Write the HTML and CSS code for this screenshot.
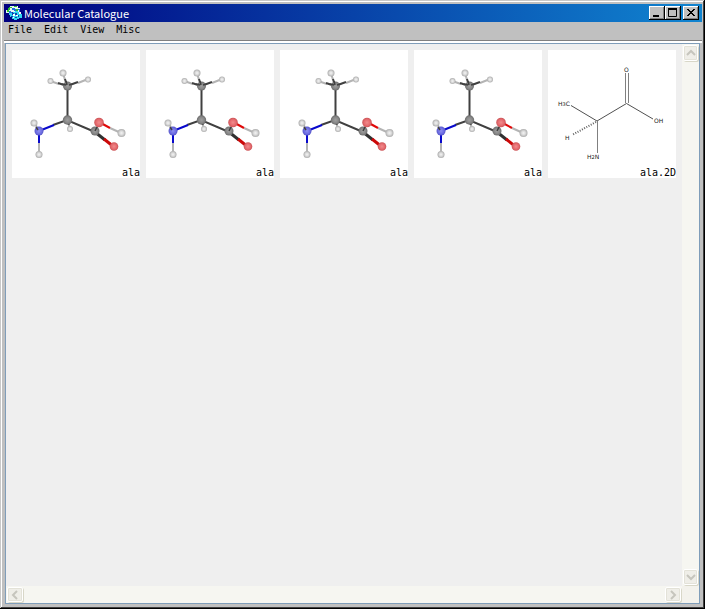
FILE: index.html
```html
<!DOCTYPE html>
<html lang="en">
<head>
<meta charset="utf-8">
<title>Molecular Catalogue</title>
<link rel="stylesheet" href="styles.css">
</head>
<body>
<svg class="defs" aria-hidden="true">
  <defs>
    <radialGradient id="carbon"><stop offset="0" stop-color="#a0a0a0"/><stop offset=".6" stop-color="#898989"/><stop offset="1" stop-color="#6c6c6c"/></radialGradient>
    <radialGradient id="hydrogen"><stop offset="0" stop-color="#f4f4f4"/><stop offset=".5" stop-color="#dadada"/><stop offset="1" stop-color="#acacac"/></radialGradient>
    <radialGradient id="oxygen"><stop offset="0" stop-color="#f08c8c"/><stop offset=".6" stop-color="#e66c70"/><stop offset="1" stop-color="#cc5558"/></radialGradient>
    <radialGradient id="nitrogen"><stop offset="0" stop-color="#9090f0"/><stop offset=".6" stop-color="#7070e4"/><stop offset="1" stop-color="#5858c8"/></radialGradient>
    <symbol id="alanine" viewBox="0 0 128 128">
      <g fill="none" stroke-width="2">
        <path stroke="#b4b4b4" d="M51 23l2 7M38 31l9 3M76 29l-10 4M27 104V93M58 79l-1-4M98 78l11 5M22 73l3 4"/>
        <path stroke="#404040" d="M53 29l2 7M46 33l9 3M55 36l11-4M55.500 36v34M41 75L55 70l28 12M55 70l2 5M83 82l2-5"/>
        <path stroke="#0808cc" d="M27 81l15-6M27 81v12"/>
        <path stroke="#e00808" d="M87 72l11 6"/>
        <path stroke="#303030" stroke-width="3" d="M83 82l10 8"/>
        <path stroke="#cc0808" stroke-width="3" d="M92 89l10 8"/>
      </g>
      <g fill="url(#hydrogen)">
        <circle cx="51" cy="23" r="3.500"/><circle cx="38.500" cy="31" r="3"/><circle cx="76" cy="29.500" r="3"/>
        <circle cx="22" cy="73" r="3.500"/><circle cx="27" cy="104.500" r="3.500"/><circle cx="58" cy="79" r="3"/><circle cx="109.500" cy="83" r="4"/>
      </g>
      <g fill="url(#carbon)"><circle cx="55.500" cy="36" r="4.500"/><circle cx="55.500" cy="70" r="4.700"/><circle cx="83" cy="81" r="4.500"/></g>
      <g fill="url(#oxygen)"><circle cx="87" cy="72.500" r="4.800"/><circle cx="102" cy="96.500" r="4.300"/></g>
      <circle cx="27" cy="81" r="4.500" fill="url(#nitrogen)"/>
      <path stroke="#404040" stroke-width="1.500" d="M24 77l2 3M83 81l2-4M54 31l1 4M50 34l4 1M57 35l4-1"/>
    </symbol>
  </defs>
</svg>
<div class="window">
  <header class="titlebar">
    <svg class="logo" viewBox="0 0 16 16" shape-rendering="crispEdges" aria-hidden="true">
      <path fill="#e4f8f4" d="M4 1h8v2h2v4H9v2H4V8H0V5h2V3h2z"/>
      <path fill="#30c030" d="M3 2h3v1H4v2H2V3h1zM8 1h3v1H8zM1 5h2v2H1zM10 4h2v2h-2z"/>
      <path fill="#2070e0" d="M6 3h3v1h1v2H8V5H6zM12 4h2v3h-1V5h-1zM3 6h2v1h1v2H3z"/>
      <path fill="#30d8f0" d="M9 6h3v1h3v2h1v4h-3v1h-2v1H8v-1H6v-2H4v-2H3V8h3V7h3z"/>
      <path fill="#1040b0" d="M6 7h1v1h1v2H6zM9 8h2v2H9zM5 11h2v1H5zM9 12h2v1H9zM12 10h1v2h-1z"/>
      <path fill="#fff" d="M7 9h2v2H7zM13 7h2v2h-2zM7 12h1v1H7zM10 10h2v1h-2z"/>
    </svg>
    <h1 class="title">Molecular Catalogue</h1>
    <div class="controls">
      <button class="control" aria-label="Minimize"><svg viewBox="0 0 12 10"><path d="M2 8h6" stroke="#000" stroke-width="2"/></svg></button>
      <button class="control" aria-label="Maximize"><svg viewBox="0 0 12 10"><path d="M1.500 0v8.500h8V0" fill="none" stroke="#000"/><path d="M1 1h9" stroke="#000" stroke-width="2"/></svg></button>
      <button class="control control-close" aria-label="Close"><svg viewBox="0 0 12 10" shape-rendering="crispEdges"><path d="M2 1h2v1h1v1h2V2h1V1h2v1H9v1H8v1H7v1h1v1h1v1h1v1H8V7H7V6H5v1H4v1H2V7h1V6h1V5h1V4H4V3H3V2H2z"/></svg></button>
    </div>
  </header>
  <nav class="menubar">
    <button class="menu">File</button><button class="menu">Edit</button><button class="menu">View</button><button class="menu">Misc</button>
  </nav>
  <div class="pane">
    <main class="catalogue">
      <figure class="card"><svg class="drawing"><use href="#alanine"/></svg><figcaption class="name">ala</figcaption></figure>
      <figure class="card"><svg class="drawing"><use href="#alanine"/></svg><figcaption class="name">ala</figcaption></figure>
      <figure class="card"><svg class="drawing"><use href="#alanine"/></svg><figcaption class="name">ala</figcaption></figure>
      <figure class="card"><svg class="drawing"><use href="#alanine"/></svg><figcaption class="name">ala</figcaption></figure>
      <figure class="card">
        <svg class="drawing" viewBox="0 0 128 128">
          <g fill="none" stroke="#505050">
            <path d="M23 55.500L49 71L78.500 53.500L105 69"/>
            <path stroke="#808080" d="M77.500 53V23M80.500 53V23M49.500 71v32"/>
            <path stroke="#606060" stroke-width="2" stroke-dasharray="1 1.500" d="M48 72L24 85"/>
          </g>
          <g class="atoms"><text x="10" y="56">H<tspan class="sub">3</tspan>C</text><text x="76" y="22">O</text><text x="106" y="73">OH</text><text x="17" y="90">H</text><text x="39" y="109">H<tspan class="sub">2</tspan>N</text></g>
        </svg>
        <figcaption class="name">ala.2D</figcaption>
      </figure>
    </main>
    <div class="scroll scroll-y">
      <button class="arrow" aria-label="Scroll up"><svg viewBox="0 0 12 12"><path d="M2 8l4-4l4 4"/></svg></button>
      <button class="arrow" aria-label="Scroll down"><svg viewBox="0 0 12 12"><path d="M2 4l4 4l4-4"/></svg></button>
    </div>
    <div class="scroll scroll-x">
      <button class="arrow" aria-label="Scroll left"><svg viewBox="0 0 12 12"><path d="M8 2L4 6l4 4"/></svg></button>
      <button class="arrow" aria-label="Scroll right"><svg viewBox="0 0 12 12"><path d="M4 2l4 4l-4 4"/></svg></button>
    </div>
    <div class="corner"></div>
  </div>
</div>
</body>
</html>
```
FILE: styles.css
```css
* { box-sizing: border-box; }
body { margin: 0; background: #c0c0c0; }
.defs { position: absolute; width: 0; height: 0; }
.window {
  display: flex;
  flex-direction: column;
  min-height: 100vh;
  padding: 4px 3px 3px 4px;
  background: #c0c0c0;
  box-shadow: inset -1px -1px #000, inset 1px 1px #c8c8c8, inset -2px -2px #404040, inset 2px 2px #fff;
}
.titlebar {
  display: flex;
  align-items: center;
  height: 18px;
  padding: 0 3px 0 2px;
  background: linear-gradient(90deg, #000080, #1084d0);
}
.logo { width: 16px; height: 16px; }
.title {
  margin: 0 0 0 2px;
  color: #fff;
  font: 400 11px/18px "Noto Sans CJK JP", "Liberation Sans", sans-serif;
}
.controls { display: flex; margin-left: auto; }
.control {
  width: 16px;
  height: 14px;
  padding: 1px 2px 2px;
  border: 0;
  background: #c0c0c0;
  box-shadow: inset -1px -1px #000, inset 1px 1px #fff, inset -2px -2px #808080;
}
.control svg { display: block; width: 12px; height: 10px; }
.control-close { margin-left: 2px; }
.menubar {
  display: flex;
  gap: 12px;
  height: 21px;
  padding: 1px 4px 4px;
  border-bottom: 2px solid #fff;
  box-shadow: inset 0 -1px #808080;
}
.menu {
  padding: 0;
  border: 0;
  background: none;
  color: #000;
  font: 10px/14px "DejaVu Sans Mono", monospace;
}
.pane {
  display: grid;
  flex: 1;
  grid-template: 1fr 17px / 1fr 17px;
  margin: 0 2px 2px 1px;
  border: 1px solid #7f9db9;
}
.catalogue {
  display: flex;
  flex-wrap: wrap;
  align-content: flex-start;
  gap: 6px;
  padding: 6px;
  background: #efefef;
}
.card {
  position: relative;
  width: 128px;
  height: 128px;
  margin: 0;
  background: #fff;
}
.drawing { display: block; width: 128px; height: 128px; }
.name {
  position: absolute;
  right: 0;
  bottom: 0;
  color: #000;
  font: 10px/10px "DejaVu Sans Mono", monospace;
}
.atoms { fill: #202020; font: 6px "DejaVu Sans", sans-serif; }
.sub { font-size: 5px; }
.scroll { display: flex; justify-content: space-between; background: #f6f6f1; }
.scroll-y { flex-direction: column; padding: 1px; }
.scroll-x { padding: 1px; }
.corner { background: #f3f2ec; }
.arrow {
  width: 15px;
  height: 16px;
  padding: 1px;
  border: 1px solid #fff;
  border-radius: 2px;
  background: #efeee8;
  box-shadow: inset 0 0 0 1px #e3e2d8, 1px 1px #d8d7c8;
}
.scroll-x .arrow { width: 16px; height: 15px; }
.arrow svg { display: block; width: 12px; height: 12px; margin: auto; }
.arrow path { fill: none; stroke: #c6c5bd; stroke-width: 2; }
```
